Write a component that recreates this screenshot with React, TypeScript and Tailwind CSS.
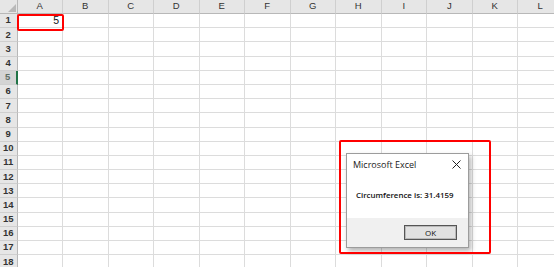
import React from "react";

const cols = ["A", "B", "C", "D", "E", "F", "G", "H", "I", "J", "K", "L"];
const rows = Array.from({ length: 18 }, (_, i) => i + 1);

function Corner() {
  return (
    <div className="relative border-r border-b border-[#b8b8b8] bg-[#e6e6e6]">
      <svg className="absolute bottom-[1px] right-[1px]" width="8" height="8" viewBox="0 0 8 8">
        <polygon points="8,0 8,8 0,8" fill="#b9b9b9" />
      </svg>
    </div>
  );
}

function Sheet() {
  return (
    <div
      className="grid grid-cols-[17.5px_repeat(12,45.5px)] grid-rows-[14px_repeat(18,14.2px)] text-[#333] font-['Liberation_Sans',Arial,sans-serif]"
    >
      <Corner />
      {cols.map((c) => (
        <div
          key={c}
          className="flex items-center justify-center border-r border-b border-r-[#cfcfcf] border-b-[#b8b8b8] bg-[#e6e6e6] text-[9.5px]"
        >
          {c}
        </div>
      ))}
      {rows.map((r) => (
        <React.Fragment key={r}>
          <div
            className={
              r === 5
                ? "flex items-center justify-center border-r-2 border-b border-r-[#217346] border-b-[#cfcfcf] bg-[#d4d4d4] text-[9.5px] font-bold text-[#5f6f65]"
                : "flex items-center justify-center border-r border-b border-r-[#b8b8b8] border-b-[#cfcfcf] bg-[#e6e6e6] text-[9.5px] font-bold"
            }
          >
            {r}
          </div>
          {cols.map((c) => (
            <div
              key={c}
              className="flex items-center justify-end border-r border-b border-[#dcdcdc] pr-[3px] text-[10.5px] text-[#111]"
            >
              {r === 1 && c === "A" ? "5" : ""}
            </div>
          ))}
        </React.Fragment>
      ))}
    </div>
  );
}

function MsgBox() {
  return (
    <div className="absolute left-[346px] top-[153px] flex h-[95px] w-[123px] flex-col border border-[#9c9c9c] bg-white shadow-[2px_3px_5px_rgba(0,0,0,0.3)] font-['Open_Sans','Noto_Sans',sans-serif]">
      <div className="flex h-[64px] flex-col bg-white">
        <div className="flex items-center justify-between pl-[6px] pr-[6px] pt-[4px]">
          <span className="text-[9px] text-[#222]">Microsoft Excel</span>
          <svg width="9" height="9" viewBox="0 0 9 9" className="mr-[1px]">
            <path d="M0.5 0.5 L8.5 8.5 M8.5 0.5 L0.5 8.5" stroke="#222" strokeWidth="1" />
          </svg>
        </div>
        <div className="pl-[9px] pt-[18px] text-[7.9px] font-semibold text-[#111]">
          Circumference is: 31.4159
        </div>
      </div>
      <div className="flex flex-1 items-start justify-end bg-[#f0f0f0] pr-[11px] pt-[7px]">
        <div className="flex h-[15px] w-[53px] items-center justify-center border border-[#555] bg-[#e1e1e1] shadow-[inset_0_0_0_1px_#b9b9b9] text-[8px] font-medium text-[#111]">
          OK
        </div>
      </div>
    </div>
  );
}

export default function App() {
  return (
    <div className="relative h-[267px] w-[554px] overflow-hidden bg-white">
      <Sheet />
      <div className="absolute left-[17px] top-[14px] h-[17px] w-[47px] rounded-[2px] border-2 border-[#f00]" />
      <MsgBox />
      <div className="absolute left-[339px] top-[140px] h-[114px] w-[152px] rounded-[2px] border-2 border-[#f00]" />
    </div>
  );
}
